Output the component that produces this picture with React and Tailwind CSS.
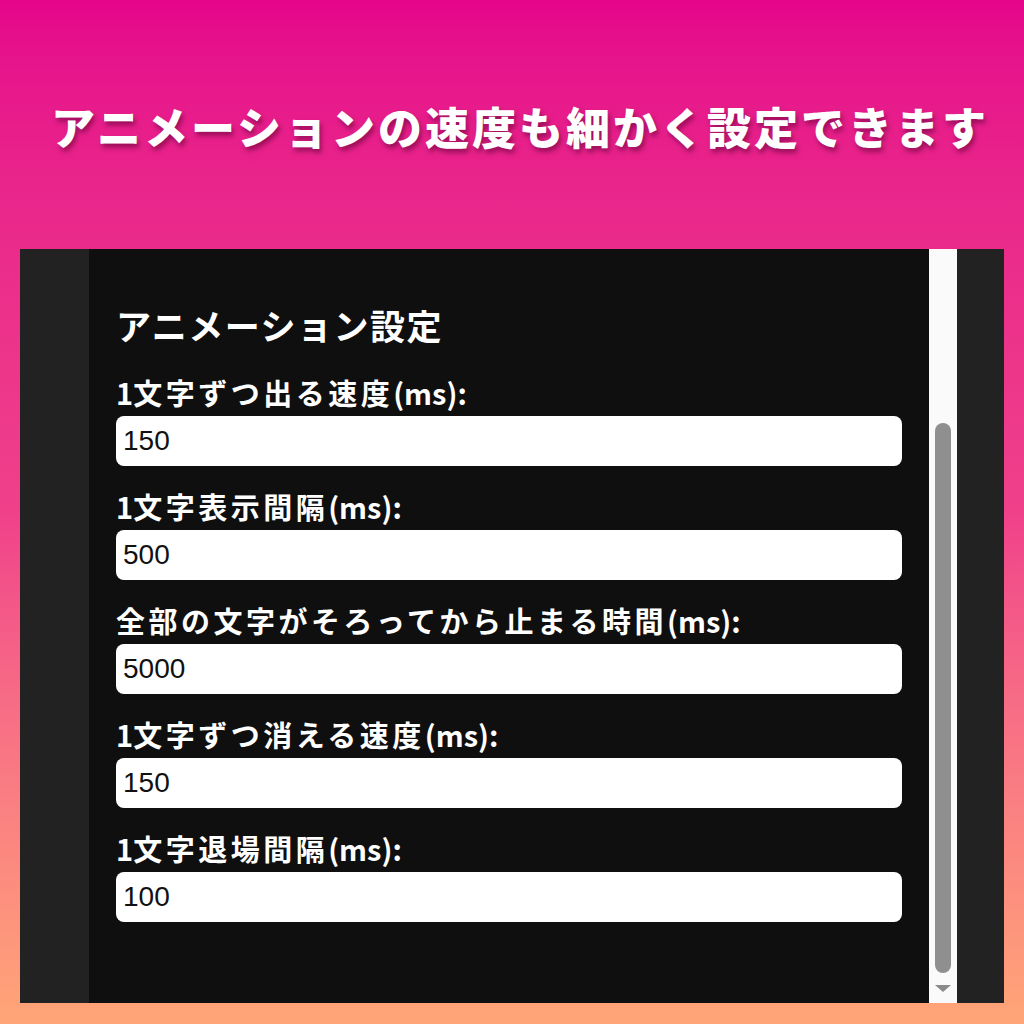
import React from 'react';

const fields = [
  { label: '1文字ずつ出る速度(ms):', value: '150' },
  { label: '1文字表示間隔(ms):', value: '500' },
  { label: '全部の文字がそろってから止まる時間(ms):', value: '5000' },
  { label: '1文字ずつ消える速度(ms):', value: '150' },
  { label: '1文字退場間隔(ms):', value: '100' },
];

const jp = { fontFamily: '"Noto Sans CJK JP", "Noto Sans", sans-serif' };

// kana/kanji get a bit of tracking, ascii stays tight
const Label = ({ text }) =>
  text.split(/([^\x00-\x7F]+)/).filter(Boolean).map((part, i) =>
    /[^\x00-\x7F]/.test(part) ? (
      <span key={i} className="tracking-[3.5px]">{part}</span>
    ) : (
      <span key={i}>{part}</span>
    )
  );

const Field = ({ label, value }) => (
  <div className="mb-[20px]">
    <div className="h-[40px] leading-[40px] mb-[4px] text-[29px] font-bold text-white whitespace-nowrap" style={jp}>
      <Label text={label} />
    </div>
    <input
      type="text"
      defaultValue={value}
      className="block w-full h-[50px] rounded-[8px] bg-white pl-[7px] text-[28px] text-[#111] outline-none font-['Liberation_Sans',Arial,sans-serif]"
    />
  </div>
);

const App = () => {
  return (
    <div className="w-full h-[1024px] overflow-hidden bg-gradient-to-b from-[#e5058b] via-[#f0408a] to-[#ffa577]">
      <h1
        className="pt-[100px] pl-[16px] h-[153px] text-center text-[44px] leading-[53px] font-black tracking-[3px] text-white whitespace-nowrap [text-shadow:2px_4px_5px_rgba(90,0,50,0.55)]"
        style={jp}
      >
        アニメーションの速度も細かく設定できます
      </h1>

      <div className="mx-[20px] mt-[96px] h-[754px] flex overflow-hidden">
        <div className="w-[69px] bg-[#222222]" />

        <div className="flex-1 bg-[#0f0f0f] pt-[54px] px-[27px]">
          <h2 className="h-[43px] leading-[43px] mb-[26px] text-[35px] font-bold tracking-[1.5px] text-white" style={jp}>
            アニメーション設定
          </h2>
          {fields.map((f, i) => (
            <Field key={i} label={f.label} value={f.value} />
          ))}
        </div>

        {/* scrollbar */}
        <div className="w-[28px] bg-[#fafafa] flex flex-col items-center pt-[174px]">
          <div className="w-[16px] h-[550px] rounded-full bg-[#8f8f8f]" />
          <div className="flex-1 flex items-center justify-center">
            <div className="w-0 h-0 border-l-[8px] border-r-[8px] border-t-[7px] border-l-transparent border-r-transparent border-t-[#8a8a8a]" />
          </div>
        </div>

        <div className="w-[47px] bg-[#222222]" />
      </div>
    </div>
  );
};

export default App;
